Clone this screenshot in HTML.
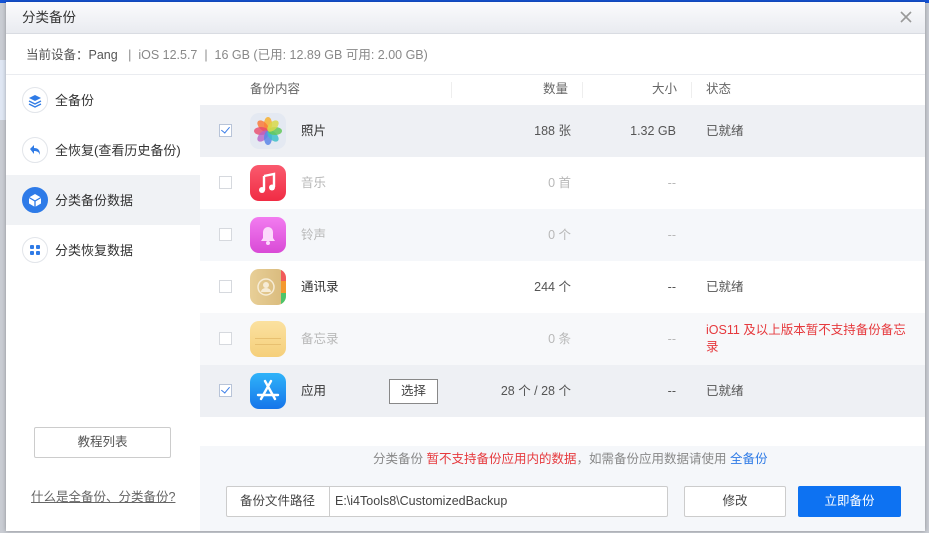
<!DOCTYPE html>
<html><head><meta charset="utf-8"><style>
*{margin:0;padding:0;box-sizing:border-box}
body{width:929px;height:533px;overflow:hidden;background:#c9ccd3;font-family:"Liberation Sans","Noto Sans CJK SC",sans-serif;font-size:12.5px;line-height:16px;color:#333;position:relative}
.a{position:absolute}
.dlg{left:6px;top:2px;width:919px;height:529px;background:#fff;box-shadow:0 0 4px rgba(0,0,0,.3)}
.t{white-space:nowrap}
.row{position:absolute;left:200px;width:725px;height:52px}
.cb{position:absolute;left:19px;width:13px;height:13px;border:1px solid #d6d9de;background:#fff;top:19px}
.cb.on{border-color:#b8c4d8}
.cb.on:after{content:"";position:absolute;left:3px;top:0px;width:4px;height:7px;border:solid #3a7de8;border-width:0 1.5px 1.5px 0;transform:rotate(40deg)}
.ic{position:absolute;left:50px;top:8px;width:36px;height:36px;border-radius:9px}
.nm{position:absolute;left:101px;top:18px}
.cnt{position:absolute;right:354px;top:18px;text-align:right}
.sz{position:absolute;right:249px;top:18px}
.st{position:absolute;left:506px;top:18px}
.dim{color:#b8b8b8}
.nav{position:absolute;left:0;width:194px;height:50px}
.nav .c{position:absolute;left:16px;top:12px;width:26px;height:26px;border-radius:50%;border:1px solid #e2e5ea;background:#fff}
.nav .l{position:absolute;left:49px;top:18px;font-size:13px;color:#333}
</style></head><body>
<div class="a" style="left:0;top:0;width:929px;height:3px;background:#1553d6"></div>
<div class="a" style="left:0;top:60px;width:6px;height:60px;background:#dfe6f3"></div>
<div class="a dlg">
 <div class="a" style="left:0;top:0;width:919px;height:32px;background:linear-gradient(#fbfbfd,#e9ebf0);border-bottom:1px solid #d9dce2"></div>
 <div class="a t" style="left:16px;top:8px;font-size:13.5px;color:#333">分类备份</div>
 <div class="a" style="left:893px;top:8px;width:14px;height:14px">
  <svg width="14" height="14"><path d="M2 2L12 12M12 2L2 12" stroke="#999" stroke-width="1.6"/></svg></div>
 <div class="a t" style="left:20px;top:45px;color:#555">当前设备：Pang &nbsp;&nbsp;<span style="color:#888">|&nbsp; iOS 12.5.7 &nbsp;|&nbsp; 16 GB (已用: 12.89 GB 可用: 2.00 GB)</span></div>
 <div class="a" style="left:0;top:72px;width:919px;height:1px;background:#eaecf0"></div>
 <div class="a" style="left:0;top:73px;width:194px;height:456px;background:#fff">
  <div class="nav" style="top:0"><div class="c"><svg width="24" height="24"><path d="M12 7l6 3-6 3-6-3z" fill="#2f7be6"/><path d="M6 13l6 3 6-3M6 16l6 3 6-3" stroke="#2f7be6" fill="none" stroke-width="1.3"/></svg></div><div class="l">全备份</div></div>
  <div class="nav" style="top:50px"><div class="c"><svg width="24" height="24"><path d="M7 11l4-4v3c4 0 6 2 6 7-1-3-3-4-6-4v3z" fill="#2f7be6"/></svg></div><div class="l">全恢复(查看历史备份)</div></div>
  <div class="nav" style="top:100px;background:#f0f2f5"><div class="c" style="background:#2e7be8;border-color:#2e7be8"><svg width="24" height="24"><path d="M12 6l6 3.5v6L12 19l-6-3.5v-6z" fill="#fff"/><path d="M12 13v6M6 9.5l6 3.5 6-3.5" stroke="#2e7be8" stroke-width="1.3" fill="none"/></svg></div><div class="l">分类备份数据</div></div>
  <div class="nav" style="top:150px"><div class="c"><svg width="24" height="24"><rect x="7" y="7" width="4" height="4" rx="1" fill="#2f7be6"/><rect x="13" y="7" width="4" height="4" rx="1" fill="#2f7be6"/><rect x="7" y="13" width="4" height="4" rx="1" fill="#2f7be6"/><rect x="13" y="13" width="4" height="4" rx="1" fill="#2f7be6"/></svg></div><div class="l">分类恢复数据</div></div>
  <div class="a" style="left:28px;top:352px;width:137px;height:31px;border:1px solid #ccc;border-radius:2px;text-align:center;line-height:29px;color:#555">教程列表</div>
  <div class="a t" style="left:25px;top:414px;color:#666;text-decoration:underline">什么是全备份、分类备份?</div>
 </div>
 <div class="a" style="left:194px;top:73px;width:725px;height:456px;background:#fff"></div>
</div>
<div class="a t" style="left:250px;top:81px;color:#666">备份内容</div>
<div class="a" style="left:451px;top:82px;width:1px;height:16px;background:#eee"></div>
<div class="a t" style="left:543px;top:81px;color:#666">数量</div>
<div class="a" style="left:582px;top:82px;width:1px;height:16px;background:#eee"></div>
<div class="a t" style="left:652px;top:81px;color:#666">大小</div>
<div class="a" style="left:691px;top:82px;width:1px;height:16px;background:#eee"></div>
<div class="a t" style="left:706px;top:81px;color:#666">状态</div>

<div class="row" style="top:105px;background:#eef0f4"><div class="cb on"></div>
 <div class="ic" style="background:#e4e9f2"><svg width="36" height="36"><g transform="translate(18 18)"><ellipse rx="4" ry="7" cy="-7" fill="#f5b43c" opacity=".9"/><ellipse rx="4" ry="7" cy="-7" fill="#f97b3b" transform="rotate(-45)" opacity=".85"/><ellipse rx="4" ry="7" cy="-7" fill="#e9486c" transform="rotate(-90)" opacity=".8"/><ellipse rx="4" ry="7" cy="-7" fill="#b662c8" transform="rotate(-135)" opacity=".8"/><ellipse rx="4" ry="7" cy="-7" fill="#5b86e8" transform="rotate(180)" opacity=".85"/><ellipse rx="4" ry="7" cy="-7" fill="#3ec0c9" transform="rotate(135)" opacity=".85"/><ellipse rx="4" ry="7" cy="-7" fill="#63c85a" transform="rotate(90)" opacity=".85"/><ellipse rx="4" ry="7" cy="-7" fill="#d8d84a" transform="rotate(45)" opacity=".85"/></g></svg></div>
 <div class="nm">照片</div><div class="cnt t" style="color:#555">188 张</div><div class="sz t" style="color:#555">1.32 GB</div><div class="st t" style="color:#555">已就绪</div></div>

<div class="row" style="top:157px;background:#fff"><div class="cb"></div>
 <div class="ic" style="background:linear-gradient(#fa5a6e,#f02c44)"><svg width="36" height="36"><path d="M14 11l10-2v13" stroke="#fff" stroke-width="2.4" fill="none"/><path d="M14 11v14" stroke="#fff" stroke-width="2.4"/><circle cx="12" cy="25" r="3" fill="#fff"/><circle cx="22" cy="22.5" r="3" fill="#fff"/></svg></div>
 <div class="nm dim">音乐</div><div class="cnt t dim">0 首</div><div class="sz t dim">--</div></div>

<div class="row" style="top:209px;background:#f5f7fa"><div class="cb"></div>
 <div class="ic" style="background:linear-gradient(#f27cf0,#d94ad6)"><svg width="36" height="36"><path d="M11 24h14l-2-3v-6a5 5 0 0 0-10 0v6z" fill="#fcd9fb"/><circle cx="18" cy="26" r="2" fill="#fcd9fb"/></svg></div>
 <div class="nm dim">铃声</div><div class="cnt t dim">0 个</div><div class="sz t dim">--</div></div>

<div class="row" style="top:261px;background:#fff"><div class="cb"></div>
 <div class="ic" style="background:linear-gradient(90deg,#e8cf97,#d8b97b);overflow:hidden"><div class="a" style="right:0;top:0;width:5px;height:12px;background:#f25a5a"></div><div class="a" style="right:0;top:12px;width:5px;height:12px;background:#f4982e"></div><div class="a" style="right:0;top:24px;width:5px;height:12px;background:#4cc56a"></div><svg width="36" height="36" class="a" style="left:0;top:0"><circle cx="16" cy="18" r="8" fill="none" stroke="#f6ecd6" stroke-width="1.5"/><circle cx="16" cy="16" r="3" fill="#f6ecd6"/><path d="M11 23a5 4 0 0 1 10 0" fill="#f6ecd6"/></svg></div>
 <div class="nm">通讯录</div><div class="cnt t" style="color:#555">244 个</div><div class="sz t" style="color:#555">--</div><div class="st t" style="color:#555">已就绪</div></div>

<div class="row" style="top:313px;background:#f7f8fa"><div class="cb"></div>
 <div class="ic" style="background:linear-gradient(#fbe1a0,#f5cf7a)"><div class="a" style="left:5px;right:5px;top:17px;height:1px;background:#e8c070"></div><div class="a" style="left:5px;right:5px;top:23px;height:1px;background:#e8c070"></div></div>
 <div class="nm dim">备忘录</div><div class="cnt t dim">0 条</div><div class="sz t dim">--</div>
 <div class="a" style="left:506px;top:9px;width:205px;color:#e6393d;line-height:17px">iOS11 及以上版本暂不支持备份备忘录</div></div>

<div class="row" style="top:365px;background:#eef0f4"><div class="cb on"></div>
 <div class="ic" style="background:linear-gradient(#2fb3f9,#1675ea)"><svg width="36" height="36"><path d="M15 8l10 18M21 8L11 26M8 22h20" stroke="#fff" stroke-width="2.4" stroke-linecap="round"/></svg></div>
 <div class="nm">应用</div>
 <div class="a" style="left:189px;top:14px;width:49px;height:25px;border:1px solid #888;background:#fff;text-align:center;line-height:23px;color:#444">选择</div>
 <div class="cnt t" style="color:#555">28 个 / 28 个</div><div class="sz t" style="color:#555">--</div><div class="st t" style="color:#555">已就绪</div></div>

<div class="a" style="left:200px;top:446px;width:725px;height:85px;background:#f5f7fa"></div>
<div class="a t" style="left:373px;top:451px;color:#888">分类备份 <span style="color:#e6393d">暂不支持备份应用内的数据</span>，如需备份应用数据请使用 <span style="color:#2f7be6">全备份</span></div>
<div class="a" style="left:226px;top:486px;width:442px;height:31px;border:1px solid #ccc;background:#fff;border-radius:2px"></div>
<div class="a" style="left:329px;top:487px;width:1px;height:29px;background:#ccc"></div>
<div class="a t" style="left:240px;top:493px;color:#444">备份文件路径</div>
<div class="a t" style="left:335px;top:493px;color:#444">E:\i4Tools8\CustomizedBackup</div>
<div class="a" style="left:684px;top:486px;width:102px;height:31px;border:1px solid #ccc;background:#fff;text-align:center;line-height:29px;color:#444;border-radius:2px">修改</div>
<div class="a" style="left:798px;top:486px;width:103px;height:31px;background:#0d72f2;text-align:center;line-height:31px;color:#fff;border-radius:2px">立即备份</div>
</body></html>
